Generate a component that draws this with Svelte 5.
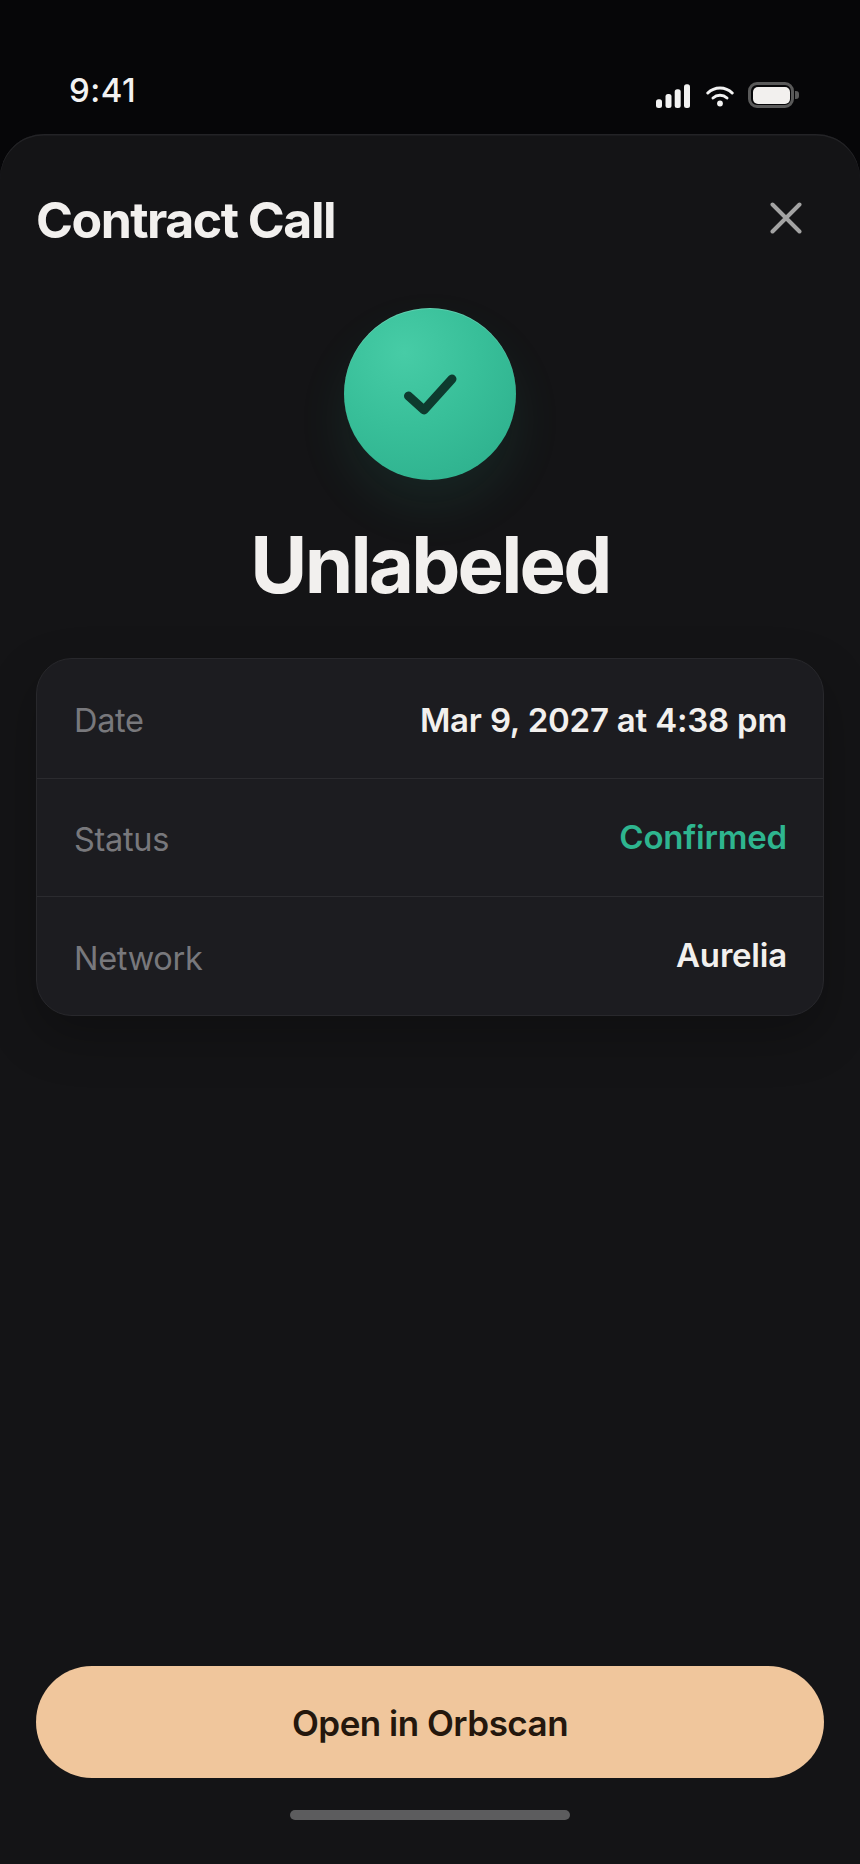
<script>
  const rows = [
    { label: 'Date', value: 'Mar 9, 2027 at 4:38 pm', kind: 'date' },
    { label: 'Status', value: 'Confirmed', kind: 'ok' },
    { label: 'Network', value: 'Aurelia', kind: 'net' }
  ];
</script>

<div class="screen">
  <header class="status">
    <span class="time">9:41</span>
    <div class="indicators">
      <svg class="signal" width="34" height="24" viewBox="0 0 34 24" fill="#f2f2f2">
        <rect x="0" y="15.3" width="6" height="8.7" rx="2.5" />
        <rect x="9.5" y="10" width="6" height="14" rx="2.5" />
        <rect x="18.7" y="5.3" width="6" height="18.7" rx="2.5" />
        <rect x="28" y="0.3" width="6" height="23.7" rx="2.5" />
      </svg>
      <svg class="wifi" width="28" height="22" viewBox="0 0 28 22" fill="none" stroke="#f2f2f2" stroke-width="3" stroke-linecap="round">
        <path d="M1.8 8 C8.6 1.2 19.4 1.2 26.2 8" />
        <path d="M7 13 C11 9.4 17 9.4 21 13" />
        <circle cx="14" cy="18.5" r="2.9" fill="#f2f2f2" stroke="none" />
      </svg>
      <div class="battery">
        <div class="shell"><div class="fill"></div></div>
        <div class="cap"></div>
      </div>
    </div>
  </header>

  <main class="sheet">
    <div class="titlebar">
      <h1>Contract Call</h1>
      <svg class="close" width="32" height="32" viewBox="0 0 32 32" fill="none" stroke="#a3a3a3" stroke-width="4" stroke-linecap="round">
        <path d="M2.5 2.5 L29.5 29.5 M29.5 2.5 L2.5 29.5" />
      </svg>
    </div>

    <div class="badge">
      <svg width="54" height="42" viewBox="0 0 54 42" fill="none" stroke="#0e3a2e" stroke-width="9" stroke-linecap="round" stroke-linejoin="round">
        <path d="M5.5 23 L21 37 L49 6" />
      </svg>
    </div>

    <h2>Unlabeled</h2>

    <section class="card">
      {#each rows as row}
        <div class="row {row.kind}">
          <span class="label">{row.label}</span>
          <span class="value">{row.value}</span>
        </div>
      {/each}
    </section>

    <div class="spacer"></div>

    <button class="cta">Open in Orbscan</button>
    <div class="home"></div>
  </main>
</div>

<style>
  :global(body) {
    margin: 0;
    background: #060608;
  }
  .screen {
    width: 860px;
    height: 1864px;
    display: flex;
    flex-direction: column;
    overflow: hidden;
    background: #060608;
    font-family: Inter, "Liberation Sans", sans-serif;
  }
  .status {
    height: 134px;
    flex: none;
    box-sizing: border-box;
    padding: 0 61px 0 69px;
    display: flex;
    justify-content: space-between;
    align-items: flex-start;
  }
  .time {
    margin-top: 71px;
    font-size: 33px;
    line-height: 39px;
    font-weight: 550;
    color: #f2f2f2;
    letter-spacing: 0.5px;
  }
  .indicators {
    margin-top: 82px;
    height: 26px;
    display: flex;
    align-items: flex-end;
  }
  .signal {
    margin-right: 16px;
  }
  .wifi {
    margin-right: 14px;
    margin-bottom: 1px;
  }
  .battery {
    display: flex;
    align-items: center;
    gap: 1px;
  }
  .shell {
    box-sizing: border-box;
    width: 46px;
    height: 26px;
    padding: 1.5px;
    border: 3px solid #5a5a5a;
    border-radius: 9px;
  }
  .fill {
    width: 100%;
    height: 100%;
    background: #f2f0ee;
    border-radius: 5px;
  }
  .cap {
    width: 4px;
    height: 8px;
    background: #5a5a5a;
    border-radius: 0 3px 3px 0;
  }
  .sheet {
    flex: 1;
    min-height: 0;
    display: flex;
    flex-direction: column;
    background: #141416;
    border-radius: 44px 44px 0 0;
    box-shadow: inset 0 1.5px 0 #232326;
    padding: 0 36px;
  }
  .titlebar {
    height: 172px;
    flex: none;
    display: flex;
    justify-content: space-between;
    align-items: center;
    padding-right: 22px;
  }
  .close {
    margin-top: -4px;
  }
  h1 {
    margin: 0;
    font-size: 50px;
    line-height: 58px;
    font-weight: 750;
    letter-spacing: -1.5px;
    color: #f2f0ee;
  }
  .badge {
    flex: none;
    align-self: center;
    width: 172px;
    height: 172px;
    margin-top: 2px;
    border-radius: 50%;
    display: flex;
    align-items: center;
    justify-content: center;
    background: radial-gradient(circle at 35% 26%, #47cca6 0%, #38bf99 45%, #2bac8a 100%);
    box-shadow: 0 26px 50px rgba(46, 190, 150, 0.1), inset 0 1px 0 rgba(255, 255, 255, 0.18);
  }
  h2 {
    margin: 39px 0 0;
    text-align: center;
    font-size: 78px;
    line-height: 92px;
    font-weight: 750;
    letter-spacing: -2.8px;
    color: #f2f0ee;
  }
  .card {
    flex: none;
    margin-top: 47px;
    background: #1c1c20;
    border: 1.5px solid #28282c;
    border-radius: 36px;
    box-shadow: 0 20px 50px rgba(0, 0, 0, 0.25);
    overflow: hidden;
  }
  .row {
    height: 118px;
    box-sizing: border-box;
    padding: 0 36px 0 37px;
    display: flex;
    justify-content: space-between;
    align-items: center;
    border-top: 1.5px solid #2b2b2f;
  }
  .row:first-child {
    height: 119px;
    border-top: 0;
  }
  .row:last-child {
    height: 119px;
  }
  .label {
    padding-top: 4px;
    font-size: 32.5px;
    letter-spacing: -0.3px;
    color: #78787c;
  }
  .value {
    margin-top: -2px;
    font-size: 33px;
    font-weight: 560;
    letter-spacing: -0.2px;
    color: #f2f0ee;
  }
  .row:first-child .label {
    padding-top: 3px;
  }
  .row:first-child .value {
    margin-top: 3px;
  }
  .ok .value {
    color: #2eb58f;
  }
  .spacer {
    flex: 1;
  }
  .cta {
    flex: none;
    height: 112px;
    border: 0;
    border-radius: 56px;
    padding-top: 3px;
    background: #f0c69c;
    color: #24170d;
    font-family: inherit;
    font-size: 35px;
    font-weight: 580;
    letter-spacing: -0.5px;
  }
  .home {
    flex: none;
    align-self: center;
    width: 280px;
    height: 10px;
    margin: 32px 0 44px;
    border-radius: 5px;
    background: #5c5c5e;
  }
</style>
